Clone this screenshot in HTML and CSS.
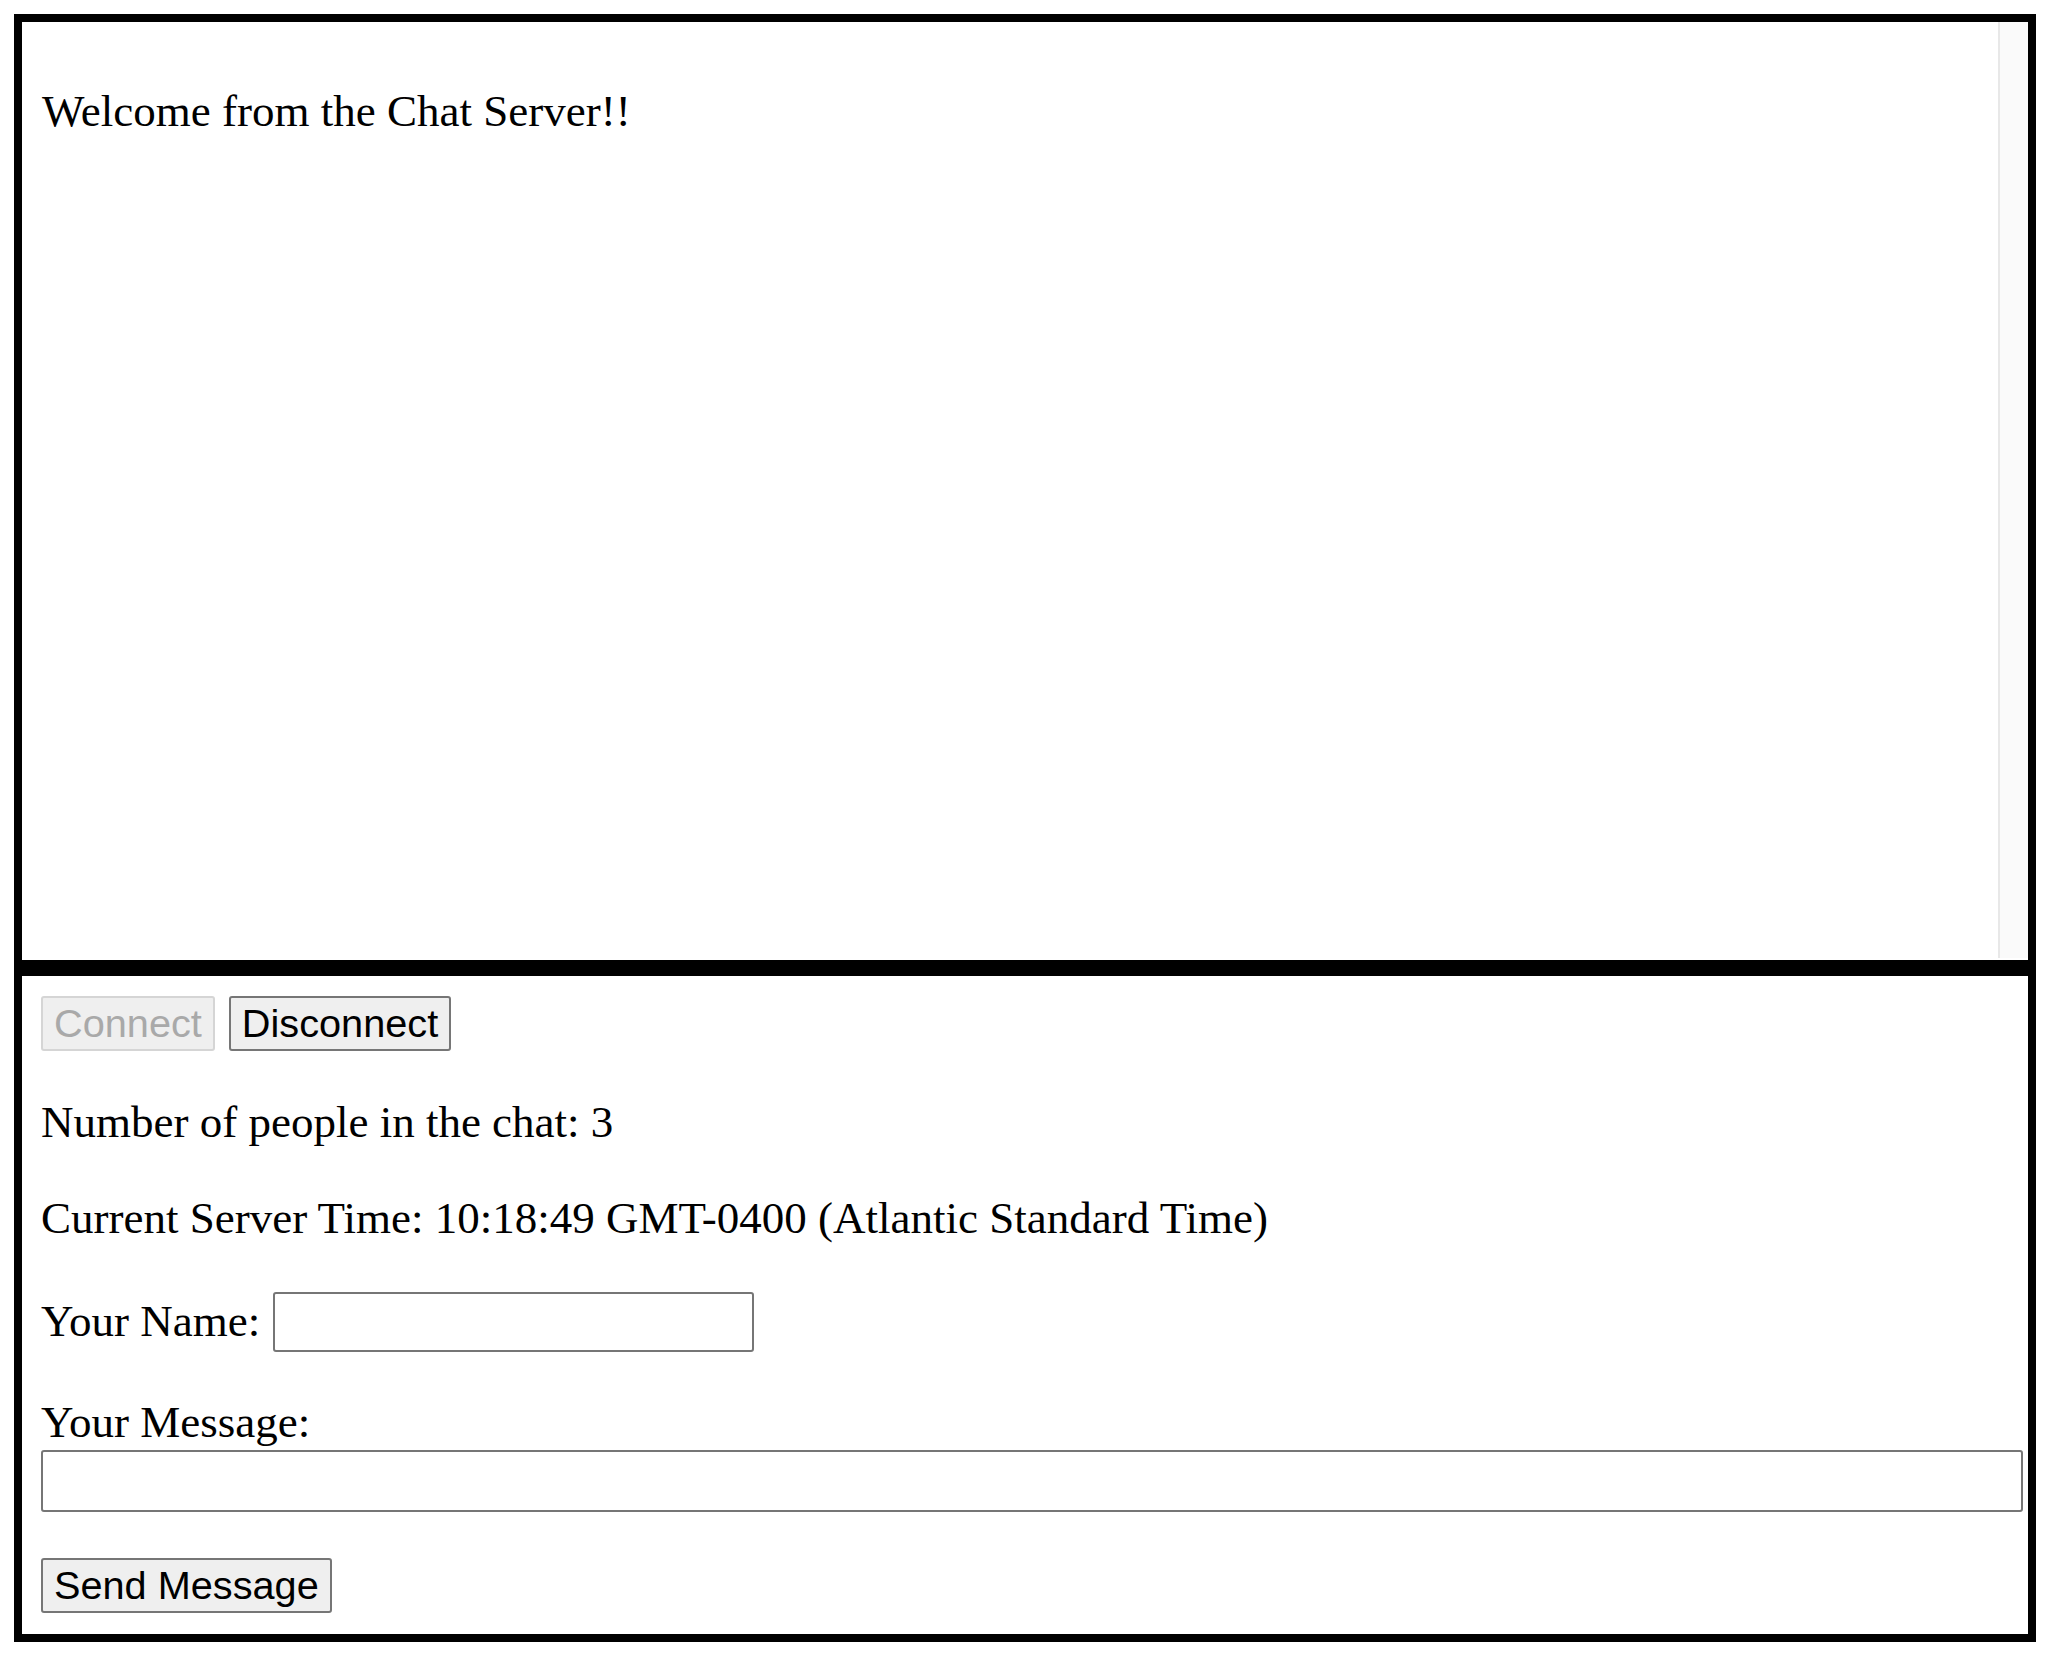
FILE: index.html
```html
<!DOCTYPE html>
<html lang="en">
<head>
<meta charset="utf-8">
<title>Chat</title>
<link rel="stylesheet" href="styles.css">
</head>
<body>
<div class="chat-window">
  <div class="messages">
    <p class="welcome">Welcome from the Chat Server!!</p>
  </div>
  <div class="scrollbar"></div>
</div>
<div class="controls">
  <div class="btn-row">
    <button class="btn" disabled>Connect</button>
    <button class="btn">Disconnect</button>
  </div>
  <p class="line">Number of people in the chat: 3</p>
  <p class="line">Current Server Time: 10:18:49 GMT-0400 (Atlantic Standard Time)</p>
  <div class="name-row">
    <label class="name-label" for="name">Your Name:</label>
    <input id="name" class="field name-field" type="text">
  </div>
  <div class="message-block">
    <label class="message-label" for="msg">Your Message:</label>
    <input id="msg" class="field message-field" type="text">
  </div>
  <div class="send-row"><button class="btn">Send Message</button></div>
</div>
</body>
</html>
```
FILE: styles.css
```css
html, body {
  background: #ffffff;
}
body {
  margin: 14px;
  font-family: "Liberation Serif", "Times New Roman", serif;
  font-size: 45px;
  color: #000000;
}
.chat-window {
  box-sizing: border-box;
  width: 2022px;
  height: 954px;
  border: 8px solid #000000;
  display: flex;
}
.messages {
  flex: 1;
  padding: 20px 20px;
  overflow: hidden;
}
.welcome {
  margin: 43.2px 0 0 0;
}
.line {
  margin: 44.6px 0 0 0;
}
.scrollbar {
  box-sizing: border-box;
  width: 30px;
  height: 936px;
  background: #fafafa;
  border-left: 2px solid #e8e8e8;
}
.controls {
  box-sizing: border-box;
  width: 2022px;
  height: 674px;
  border: 8px solid #000000;
  padding: 20px 19px 19px 19px;
}
.btn-row {
  display: flex;
  align-items: flex-start;
  gap: 14px;
  height: 55px;
}
.btn {
  box-sizing: border-box;
  height: 55px;
  font-family: "Liberation Sans", Arial, sans-serif;
  font-size: 39.7px;
  padding: 0 11px;
  margin: 0;
  border: 2px solid #767676;
  border-radius: 3px;
  background: #efefef;
  color: #000000;
  line-height: 1;
}
.btn:disabled {
  border-color: #d5d5d5;
  background: #efefef;
  color: #a9a9a9;
}
.name-row {
  display: flex;
  align-items: flex-start;
  gap: 13px;
  height: 63px;
  margin-top: 44.6px;
}
.name-label {
  margin-top: 6px;
}
.message-block {
  margin-top: 44.6px;
}
.message-label {
  display: block;
}
.field {
  box-sizing: border-box;
  border: 2px solid #767676;
  border-radius: 3px;
  background: #ffffff;
  font-family: "Liberation Sans", Arial, sans-serif;
  font-size: 30px;
  padding: 0 5px;
  margin: 0;
}
.name-field {
  width: 481px;
  height: 60px;
  margin-top: 3px;
}
.message-field {
  display: block;
  width: 1982px;
  height: 62px;
  margin-top: 2px;
}
.send-row {
  display: flex;
  margin-top: 46px;
}
```
